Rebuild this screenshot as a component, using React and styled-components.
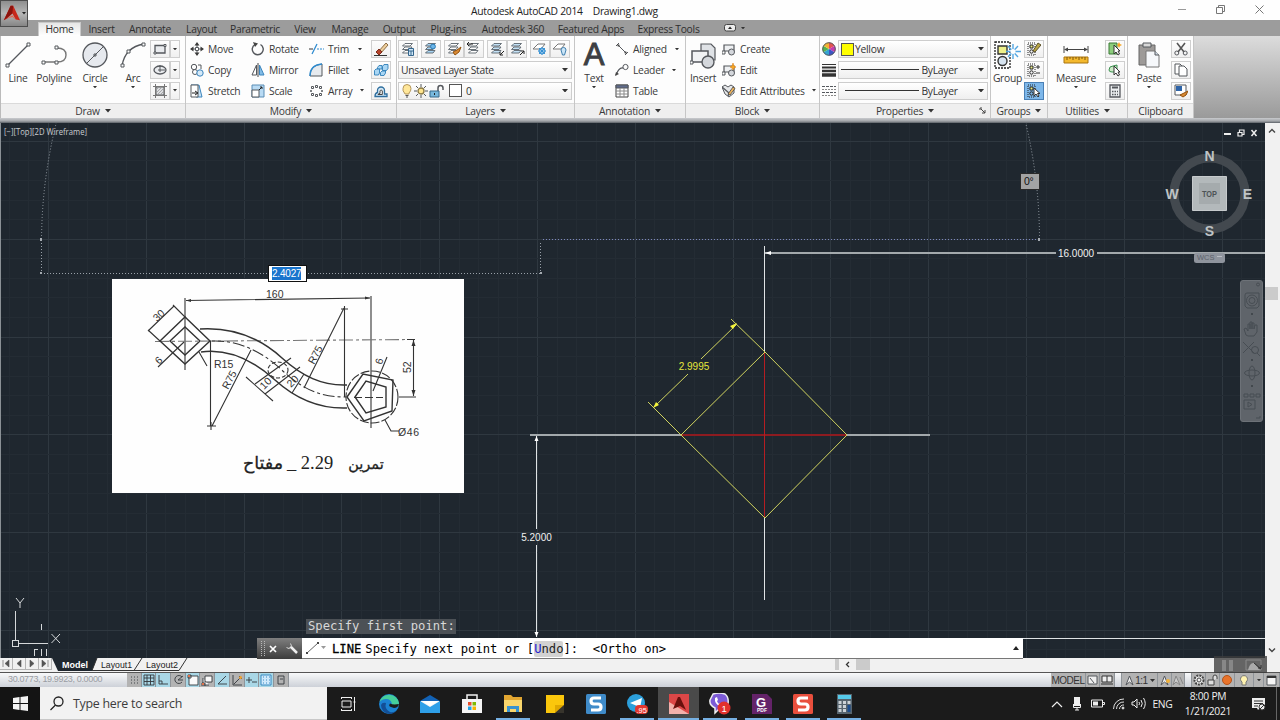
import React from 'react';
import styled, { createGlobalStyle } from 'styled-components';

const GlobalStyle = createGlobalStyle`
    * {
        box-sizing: border-box;
    }

    body {
        margin: 0;
        overflow: hidden;
        background: #1f272f;
        font-family: 'Open Sans', 'Noto Sans', sans-serif;
        font-size: 10.3px;
        letter-spacing: -0.26px;
        color: #3a3a3a;
    }

    svg {
        display: block;
        flex: none;
        letter-spacing: 0;
    }
`;

const Window = styled.div`
    position: relative;
    display: flex;
    flex-direction: column;
    width: 1280px;
    height: 720px;
    overflow: hidden;
`;

/* ---------- title and tabs ---------- */

const TitleBar = styled.header`
    display: flex;
    align-items: center;
    height: 20px;
    padding-left: 471px;
    background: #fefefe;
    color: #222;
    white-space: pre;
`;

const TitleText = styled.span`
    display: flex;
    gap: 10px;
    padding-top: 1px;
`;

const WindowButtons = styled.div`
    display: flex;
    gap: 30px;
    margin-left: auto;
    padding: 0 16px 2px 0;
`;

const AppButton = styled.div`
    position: absolute;
    top: 0;
    left: 0;
    display: flex;
    align-items: center;
    gap: 2px;
    width: 28px;
    height: 27px;
    padding-left: 2px;
    border: 1px solid #4d4d4d;
    background: linear-gradient(#8e8e8e, #b7b7b7 50%, #858585);
`;

const TabBar = styled.nav`
    display: flex;
    height: 16px;
    padding-left: 38px;
    background: #9c9c9c;
`;

const Tab = styled.span`
    width: ${(props) => props.$width}px;
    height: 13px;
    margin-top: 3px;
    line-height: 12px;
    text-align: center;
    color: #2e2e2e;
    white-space: nowrap;
    ${(props) => props.$active && `
        height: 14px;
        margin-top: 2px;
        line-height: 13px;
        background: linear-gradient(#e6e6e6, #fff);
        border: 1px solid #c9c9c9;
        border-bottom: 0;
    `}
`;

const TabToggle = styled.div`
    display: flex;
    align-items: center;
    gap: 5px;
    margin-left: 17px;
`;

/* ---------- ribbon ---------- */

const Ribbon = styled.section`
    display: flex;
    height: 82px;
    background: linear-gradient(#dcdcdc, #9a9a9a);
    border-left: 1px solid #bbb;
`;

const RibbonPanel = styled.div`
    display: flex;
    flex-direction: column;
    width: ${(props) => props.$width}px;
    background: #fdfdfd;
    border-right: 1px solid #c6c6c6;
`;

const PanelBody = styled.div`
    display: flex;
    height: 67px;
    padding-top: 4px;
`;

const PanelTitle = styled.div`
    position: relative;
    display: flex;
    align-items: center;
    justify-content: center;
    gap: 5px;
    height: 15px;
    border-top: 1px solid #dadada;
    background: #efefef;
`;

const Launcher = styled.span`
    position: absolute;
    right: 4px;
    top: 3px;
`;

const BigButton = styled.div`
    display: flex;
    flex-direction: column;
    align-items: center;
    flex: none;
    width: ${(props) => props.$width}px;
    margin-left: ${(props) => props.$gap || 0}px;
`;

const BigIcon = styled.span`
    display: flex;
    align-items: center;
    justify-content: center;
    height: 30px;
`;

const BigLabel = styled.span`
    height: 16px;
    line-height: 16px;
    white-space: nowrap;
`;

const LetterA = styled.span`
    height: 30px;
    font: 31px/30px 'Liberation Sans', sans-serif;
    color: #3d3f43;
    -webkit-text-stroke: 1px #3d3f43;
`;

const ToolColumn = styled.div`
    display: flex;
    flex-direction: column;
    flex: none;
    gap: 2.8px;
    width: ${(props) => props.$width}px;
    margin-left: ${(props) => props.$gap || 0}px;
`;

const ToolRow = styled.div`
    display: flex;
    align-items: center;
    height: 18px;
    gap: ${(props) => props.$gap || 0}px;
    white-space: nowrap;
`;

const ToolLabel = styled.span`
    margin-left: 4px;
    margin-right: ${(props) => props.$after || 0}px;
    line-height: 16px;
`;

const SmallButton = styled.span`
    display: flex;
    align-items: center;
    justify-content: center;
    width: ${(props) => props.$width || 20}px;
    height: 18px;
    border: 1px solid ${(props) => (props.$on ? '#4a80b5' : '#cfcfcf')};
    background: ${(props) => (props.$on ? '#7db7ea' : 'linear-gradient(#fdfdfd, #f0f0f0)')};
`;

const Combo = styled.span`
    display: flex;
    align-items: center;
    width: ${(props) => props.$width}px;
    height: 18px;
    padding: 0 3px 0 2px;
    border: 1px solid #cdcdcd;
    background: linear-gradient(#fff, #efefef);
    color: #333;
`;

const ComboEnd = styled.span`
    margin-left: auto;
`;

const Swatch = styled.span`
    width: 13px;
    height: 13px;
    margin-left: ${(props) => props.$before || 0}px;
    margin-right: ${(props) => props.$after || 2}px;
    border: 1px solid #555;
    background: ${(props) => props.$color};
`;

const RibbonEdge = styled.div`
    height: 5px;
    background: linear-gradient(#c9cbce, #a3a6aa 60%, #5a6066);
`;

/* ---------- drawing area ---------- */

const Workspace = styled.main`
    display: flex;
    height: 535px;
`;

const Canvas = styled.div`
    position: relative;
    width: 1265px;
    height: 535px;
    background: #1f272f;
`;

const ScrollBar = styled.div`
    display: flex;
    flex-direction: column;
    align-items: center;
    width: 15px;
    padding: 5px 2px 5px 0;
    background: #f1f1f1;
`;

const ScrollThumb = styled.span`
    width: 13px;
    height: 13px;
    margin-top: 154px;
    margin-bottom: auto;
    background: #cbcbcb;
`;

const DynamicInput = styled.div`
    position: absolute;
    left: ${(props) => props.$x}px;
    top: ${(props) => props.$y}px;
    width: ${(props) => props.$width}px;
    height: 17px;
    padding: 1px 3px;
    border: 1px solid ${(props) => (props.$locked ? '#2a2a2a' : '#111')};
    background: ${(props) => (props.$locked ? '#a3a3a3' : '#fff')};
    color: ${(props) => (props.$locked ? '#111' : '#fff')};
    font: 10.5px/13px 'Liberation Sans', sans-serif;
`;

const Selected = styled.span`
    display: block;
    width: 29px;
    background: #1874cd;
    font-size: 10px;
    letter-spacing: -0.2px;
`;

const NavBar = styled.div`
    position: absolute;
    left: 1240px;
    top: 157px;
    width: 23px;
    height: 142px;
    border: 1px solid #6d7278;
    border-radius: 3px;
    background: #5f646a;
`;

const CommandHistory = styled.div`
    position: absolute;
    left: 306px;
    top: 496px;
    height: 15px;
    padding: 0 1px 0 2px;
    background: #4c5156;
    color: #d8d8d8;
    font: 12.2px/15px 'DejaVu Sans Mono', monospace;
    letter-spacing: 0;
    white-space: pre;
`;

const CommandLine = styled.div`
    position: absolute;
    left: 257px;
    top: 515px;
    z-index: 1;
    display: flex;
    align-items: center;
    width: 766px;
    height: 21px;
    padding-right: 4px;
    background: #fff;
    color: #000;
    font: 12.2px/16px 'DejaVu Sans Mono', monospace;
    letter-spacing: 0;
    white-space: pre;
    border-bottom: 1px solid #777;
`;

const CommandGrip = styled.span`
    display: flex;
    align-items: center;
    width: 45px;
    height: 21px;
    background: linear-gradient(#7f7f7f, #3c3c3c);
`;

const CommandText = styled.span`
    display: flex;
    align-items: center;
    margin-left: 4px;
    padding-top: 2px;
`;

const CommandName = styled.span`
    margin-right: 4px;
    -webkit-text-stroke: 0.3px #000;
`;

const CommandOption = styled.span`
    display: inline-block;
    border-radius: 2px;
    background: #d2d2d2;
    color: #222;

    &::first-letter {
        color: #1a1ad0;
    }
`;

/* ---------- layout tabs and status bar ---------- */

const LayoutStrip = styled.div`
    position: relative;
    display: flex;
    height: 14px;
    background: #f1f1f1;
`;

const StepButton = styled.span`
    display: flex;
    align-items: center;
    justify-content: center;
    width: 13px;
    height: 12px;
    border-right: 1px solid #b5b5b5;
    border-bottom: 1px solid #b5b5b5;
`;

const SheetTabs = styled.svg`
    font: 9.3px 'Liberation Sans', sans-serif;
`;

const HScroll = styled.div`
    display: flex;
    align-items: center;
    margin-left: 635px;
    gap: 6px;
    height: 13px;
`;

const HBlock = styled.span`
    width: ${(props) => props.$width}px;
    height: 11px;
    background: #cbcbcb;
`;

const RecorderOverlay = styled.div`
    position: absolute;
    left: 1214px;
    top: -2px;
    z-index: 2;
    width: 53px;
    height: 17px;
    background: rgba(60, 60, 60, 0.78);
`;

const StatusBar = styled.div`
    display: flex;
    align-items: stretch;
    height: 15px;
    padding-left: 8px;
    border-top: 1px solid #555;
    background: linear-gradient(#f8f9fa, #cdd1d8);
`;

const Coordinates = styled.span`
    width: 119px;
    font: 9px/13px 'Liberation Sans', sans-serif;
    letter-spacing: -0.35px;
    color: #9a9da3;
`;

const StatusToggle = styled.span`
    display: flex;
    align-items: center;
    justify-content: center;
    width: ${(props) => props.$width || 14.7}px;
    border-right: 1px solid #8f9499;
    background: ${(props) => (props.$on ? '#a9d7e6' : '#b3b3b3')};
    font: 10px 'Liberation Sans', sans-serif;
    letter-spacing: -0.5px;
    color: #333;
`;

const StatusGap = styled.span`
    width: 7px;
    border-right: 1px solid #8f9499;
`;

const StatusRight = styled.div`
    display: flex;
    margin-left: auto;
`;

/* ---------- windows taskbar ---------- */

const Taskbar = styled.footer`
    display: flex;
    height: 33px;
    background: #1b1b1b;
`;

const StartButton = styled.span`
    display: flex;
    align-items: center;
    justify-content: center;
    width: 40px;
    background: #141414;
`;

const SearchBox = styled.div`
    display: flex;
    align-items: center;
    gap: 9px;
    width: 287px;
    padding: 0 0 0 10px;
    border-bottom: 1px solid #c8c8c8;
    background: #f2f2f2;
    color: #3c3c3c;
    font-size: 12.4px;
`;

const TaskItem = styled.span`
    display: flex;
    align-items: center;
    justify-content: center;
    width: 41.4px;
    height: 33px;
    ${(props) => props.$active && 'background: #4a4a4a;'}
    ${(props) => props.$open && 'box-shadow: inset 0 -2px #76b0e3;'}
    ${(props) => props.$open && !props.$active && 'width: 34px; margin: 0 3.7px;'}
`;

const Tray = styled.div`
    display: flex;
    align-items: center;
    margin-left: auto;
    color: #f0f0f0;
`;

const TrayItem = styled.span`
    display: flex;
    justify-content: center;
    width: ${(props) => props.$width}px;
`;

const Clock = styled.span`
    width: 64px;
    text-align: center;
    line-height: 15px;
`;

const DesktopEdge = styled.span`
    width: 4px;
    height: 33px;
    border-left: 1px solid #666;
`;

/* ---------- icons ---------- */

const Arrow = ({ size = 5, color = '#333' }) => (
    <svg width={size} height={size * 0.6} viewBox="0 0 5 3"><path d="M0 0H5L2.5 3Z" fill={color} /></svg>
);

const Glyph = ({ w = 14, h = 14, children }) => (
    <svg width={w} height={h} viewBox={`0 0 ${w} ${h}`} fill="none" stroke="#55585d" strokeWidth="1">
        {children}
    </svg>
);

const LineIcon = () => (
    <Glyph w={26} h={28}>
        <path d="M3 24L23 4" strokeWidth="1.3" />
        <path d="M1 23h3v3H1zM22 2h3v3h-3z" fill="#fff" />
    </Glyph>
);

const PolylineIcon = () => (
    <Glyph w={27} h={22}>
        <path d="M2 18H16Q25 18 25 11T16 4" strokeWidth="1.4" stroke="#777" />
        <path d="M1 17h3v3H1zM14 17h3v3h-3zM14 2h3v3h-3z" fill="#fff" />
    </Glyph>
);

const CircleIcon = () => (
    <Glyph w={26} h={26}>
        <circle cx="13" cy="13" r="12" fill="#e6e9ee" strokeWidth="1.3" />
        <path d="M5 21L21 5M11 13h4M13 11v4" />
    </Glyph>
);

const ArcIcon = () => (
    <Glyph w={26} h={28}>
        <path d="M2 25Q5 6 24 3" strokeWidth="1.3" />
        <path d="M1 23h3v3H1zM22 2h3v3h-3zM7 9h3v3H7z" fill="#fff" />
    </Glyph>
);

const RectIcon = () => (
    <Glyph><path d="M2 3.5H12V11H2Z" fill="#e9ebee" strokeWidth="1.3" /><path d="M1 10h2v2H1zM11 2.5h2v2h-2z" fill="#fff" /></Glyph>
);

const EllipseIcon = () => (
    <Glyph><ellipse cx="7" cy="7" rx="6" ry="4" fill="#e9ebee" strokeWidth="1.3" /><path d="M5 7h7M7 3v6M6 3h2" /></Glyph>
);

const HatchIcon = () => (
    <Glyph>
        <path d="M3 3H11V11H3Z" fill="#dcdee1" />
        <path d="M3 6L6 3M3 9L9 3M4 11L11 4M7 11L11 7" stroke="#999" strokeWidth=".8" />
        <path d="M2.500 0v14M11.500 0v14M0 2.500h14M0 11.500h14" stroke="#777" />
    </Glyph>
);

const MoveIcon = () => (
    <Glyph>
        <path d="M7 1V13M1 7H13" />
        <path d="M7 0L9.500 3.500H4.500ZM7 14L4.500 10.500H9.500ZM0 7L3.500 4.500V9.500ZM14 7L10.500 9.500V4.500Z" fill="#3c3c3c" stroke="none" />
        <path d="M5.500 5.500h3v3h-3z" fill="#fff" />
    </Glyph>
);

const CopyIcon = () => (
    <Glyph>
        <circle cx="4" cy="4" r="2.7" /><path d="M8 2h3v4" />
        <circle cx="5" cy="9" r="2.5" fill="#fff" /><circle cx="10" cy="10" r="3.2" fill="#d5e9f8" stroke="#3c85bd" />
    </Glyph>
);

const StretchIcon = () => (
    <Glyph><path d="M1 1H9L12 13H6" fill="#cbe4f6" stroke="#3c85bd" /><path d="M1 1H8V13H1Z" fill="#fff" /><path d="M2 9h5M5 7l3 2-3 2" stroke="#222" /></Glyph>
);

const RotateIcon = () => (
    <Glyph><path d="M9.500 2.500A5.500 5.500 0 1 1 4 2.500" strokeWidth="1.4" /><path d="M2 0L7 1.500L4 5Z" fill="#444" stroke="none" /></Glyph>
);

const MirrorIcon = () => (
    <Glyph><path d="M5.500 2V12H1Z" fill="#fff" /><path d="M8.500 2V12H13Z" fill="#82bce6" stroke="#3c85bd" /><path d="M7 0V14" stroke="#444" /></Glyph>
);

const ScaleIcon = () => (
    <Glyph><path d="M1 1H13V13H1Z" fill="#b9dbf4" stroke="#5a8db5" /><path d="M1 6H8V13H1Z" fill="#fff" /><path d="M8 6L11 3M9 3h2v2" stroke="#222" /></Glyph>
);

const TrimIcon = () => (
    <Glyph w={15}><path d="M0 7H4" stroke="#333" /><path d="M3 12L8 2" stroke="#2d8bd0" strokeWidth="1.3" /><path d="M8 7H15" stroke="#2d8bd0" strokeDasharray="2 1" /></Glyph>
);

const FilletIcon = () => (
    <Glyph w={15}><path d="M1 13Q1 2 13 1V13Z" fill="#e6eaee" /><path d="M1 13Q1 2 13 1" stroke="#2d8bd0" strokeWidth="1.5" /></Glyph>
);

const ArrayIcon = () => (
    <Glyph w={15}><path d="M2.500 2.500h2v2h-2zM6.500 1.500h2v2h-2zM10.500 2.500h2v2h-2zM2.500 9.500h2v2h-2zM6.500 10.500h2v2h-2zM10.500 9.500h2v2h-2zM1.500 6.500h1v1h-1zM12.500 6.500h1v1h-1z" fill="#fff" /></Glyph>
);

const EraseIcon = () => (
    <Glyph w={16}><path d="M5 10L13 1L15 3L8 11Z" fill="#eecf9d" stroke="#8c6d45" /><path d="M3 10L6 7L9 10L6 13Z" fill="#b5432a" stroke="#7c2c1a" /><path d="M1 13.500h13" stroke="#333" /></Glyph>
);

const ExplodeIcon = () => (
    <Glyph w={16}>
        <g fill="#a9d6f4" stroke="#2f7fb9" strokeWidth=".9">
            <path d="M9.500 3.500L11 1.500H15V5.500L13.500 7.500H9.500Z" />
            <path d="M4.500 4.500L6 2.500H9V6H4.500Z" />
            <path d="M1.500 7.500L3 6H6.500V10L5.500 12H1.500Z" />
            <path d="M7.500 9.500L9 8H12.500V10L11 12.500H7.500Z" />
        </g>
    </Glyph>
);

const OffsetIcon = () => (
    <Glyph w={16}><path d="M2 12.500H14V10H11.500V6.500A3.500 3.500 0 0 0 4.500 6.500V8.500Q2 9 2 12.500Z" fill="#d5e9f7" stroke="#2f6f9f" strokeWidth="1.3" /><path d="M5 10.500Q5 9.500 7 9.500V7A1.200 1.200 0 0 1 9.300 7V10.500Z" fill="#fff" stroke="#444" /></Glyph>
);

/* stacked sheets, the badge on top tells the layer tools apart */
const LayerIcon = ({ tint = '#fff', badge }) => (
    <Glyph w={16}>
        <path d="M2.500 11L5 8.500H12L10 11ZM2.500 7.500L5 5H12L10 7.500ZM2.500 4L5 1.500H12.500L10 4Z" fill={tint} stroke="#5b646c" strokeWidth=".9" />
        {badge === 'grid' && <path d="M8.500 6.500h5v7h-5zM8.500 9h5M11 9v4" fill="#cfe6f7" stroke="#35668c" />}
        {badge === 'dot' && <circle cx="10" cy="4.500" r="2.400" fill="#6cb6ea" stroke="#2c7cb5" />}
        {badge === 'brush' && <path d="M7 10l4-2 4-3-2 5-4 3z" fill="#d98a34" stroke="#94530f" />}
        {badge === 'arrow' && <path d="M1 2h6M1 2l2-2M1 2l2 2" stroke="#222" />}
        {badge === 'in' && <path d="M15 9l-4 4M11 10v3h3" stroke="#222" />}
        {badge === 'out' && <path d="M11 13l4-4M12 9h3v3" stroke="#222" />}
    </Glyph>
);

const FreezeIcon = ({ bulb }) => (
    <Glyph w={16}>
        <path d="M1 7L6 2H13L9 7Z" fill="#fff" stroke="#777" />
        {bulb
            ? <path d="M9 8a2.500 2.500 0 1 1 5 0L12.500 13h-2Z" fill="#cbe5f7" stroke="#3f7fae" />
            : <g stroke="#2d8bd0" strokeWidth=".9"><circle cx="10" cy="9" r="3" fill="#d5ebfa" /><path d="M10 5v8M6 9h8M7 6l6 6M13 6l-6 6" /></g>}
    </Glyph>
);

const BulbIcon = () => (
    <Glyph w={12}><path d="M3.500 9Q1.500 7 2 4.500A4 4 0 0 1 10 4.500Q10 7 8 9V10H4Z" fill="#ffe79a" stroke="#b4965a" /><path d="M4.500 11.500h3M5 13h2" stroke="#555" /></Glyph>
);

const SunIcon = () => (
    <Glyph><circle cx="7" cy="7" r="3" fill="#ffe58e" stroke="#8b7a45" strokeWidth="1.3" /><path d="M7 0v3M7 11v3M0 7h3M11 7h3M2 2l2 2M10 10l2 2M12 2l-2 2M4 10l-2 2" /></Glyph>
);

const LockIcon = ({ fill = '#78b8dd' }) => (
    <Glyph w={15}><path d="M9 7V4A2.500 2.500 0 0 1 14 4V6" strokeWidth="1.5" /><path d="M1 7H10V13H1Z" fill={fill} stroke="#36698a" /><path d="M5.500 9v2" stroke="#222" /></Glyph>
);

const DimIcon = () => (
    <Glyph><path d="M3 3L11 11M1 4L4 1M10 13L13 10" /><path d="M2 2L5 3L3 5ZM12 12L9 11L11 9Z" fill="#444" stroke="none" /></Glyph>
);

const LeaderIcon = () => (
    <Glyph><path d="M1 12Q4 4 8 5" strokeWidth="1.3" /><circle cx="10.500" cy="4" r="2.6" /><path d="M0 13L1 9L4 11Z" fill="#444" stroke="none" /></Glyph>
);

const TableIcon = () => (
    <Glyph><path d="M1 1H13V13H1Z" fill="#fff" stroke="#444" /><path d="M1 1H13V4H1Z" fill="#5f6b8b" /><path d="M1 7H13M1 10H13M5 4V13M9 4V13" stroke="#8a8a8a" /></Glyph>
);

const InsertIcon = () => (
    <Glyph w={27} h={27}>
        <path d="M11 2H21L25 6V18H11Z" fill="#dfe2e6" strokeWidth="1.2" />
        <path d="M2 9H18V20H2Z" fill="#f1f2f4" strokeWidth="1.5" />
        <path d="M0 19h3v3H0z" fill="#fff" />
        <circle cx="18" cy="20" r="6" fill="#d4d7dc" strokeWidth="1.4" />
    </Glyph>
);

const BlockIcon = ({ kind }) => (
    <Glyph>
        <path d="M2 3H12V9H2Z" fill="#eef0f2" strokeWidth="1.2" /><path d="M0 9h3v3H0z" fill="#fff" />
        <circle cx="9.500" cy="10" r="3" fill="#d4d7dc" />
        {kind === 'edit' && <path d="M11 0l1 3 2 1-2 1-1 2-1-2-2-1 2-1z" fill="#f6a623" stroke="#d97706" strokeWidth=".5" />}
    </Glyph>
);

const AttributeIcon = () => (
    <Glyph>
        <path d="M0 3L3 1L6 3L9 1L12 3V9L7 13L3 10Z" fill="#e6e8ea" />
        <path d="M0 3L7 9L6 12" strokeWidth="1.3" />
        <path d="M6 10L11 3L13 4.500L8 11Z" fill="#efb45c" stroke="#444" strokeWidth=".8" />
    </Glyph>
);

const ColorWheel = () => (
    <Glyph>
        <path d="M7 7V0.500A6.500 6.500 0 0 1 12.600 3.700Z" fill="#e45252" stroke="none" />
        <path d="M7 7L12.600 3.700A6.500 6.500 0 0 1 12.600 10.300Z" fill="#c53cae" stroke="none" />
        <path d="M7 7L12.600 10.300A6.500 6.500 0 0 1 7 13.500Z" fill="#3c55c5" stroke="none" />
        <path d="M7 7V13.500A6.500 6.500 0 0 1 1.400 10.300Z" fill="#35a4d2" stroke="none" />
        <path d="M7 7L1.400 10.300A6.500 6.500 0 0 1 1.400 3.700Z" fill="#53b450" stroke="none" />
        <path d="M7 7L1.400 3.700A6.500 6.500 0 0 1 7 0.500Z" fill="#f2b233" stroke="none" />
        <circle cx="7" cy="7" r="6.300" />
    </Glyph>
);

const WeightIcon = () => (
    <Glyph><path d="M0 1.500H14" stroke="#333" /><path d="M0 4.500H14" stroke="#333" strokeWidth="2" /><path d="M0 8H14" stroke="#333" strokeWidth="2.500" /><path d="M0 12H14" stroke="#333" strokeWidth="3.500" /></Glyph>
);

const LinetypeIcon = () => (
    <Glyph><path d="M0 2.500H14M0 8.500H14" strokeDasharray="3 1" /><path d="M0 5.500H14M0 11.500H14" strokeDasharray="2 1" stroke="#888" /></Glyph>
);

const GroupIcon = () => (
    <Glyph w={27} h={28}>
        <path d="M1 1H16V27H1Z" stroke="#222" strokeWidth="1.3" strokeDasharray="2 1" />
        <path d="M4 5H13V13H4Z" fill="#eef08a" stroke="#333" strokeWidth="1.4" />
        <circle cx="8.500" cy="20" r="4.500" fill="#d6e3ef" stroke="#333" strokeWidth="1.4" />
        <path d="M19 3V18M12 10.500H27M14 5L24 16M24 5L14 16" stroke="#54a7e2" strokeWidth="1.4" />
        <circle cx="19" cy="10.500" r="2.500" fill="#fff" stroke="none" />
    </Glyph>
);

const GroupTool = ({ kind }) => (
    <Glyph>
        <path d="M1 1H8V13H1Z" strokeDasharray="1 1" stroke="#222" /><path d="M3 3h3v3H3z" fill="#eef08a" stroke="#222" /><circle cx="4.500" cy="9.500" r="1.700" stroke="#222" />
        {kind === 'edit' && <path d="M6 9L11 1L14 3L8 10Z" fill="#b8a545" stroke="#5c522a" />}
        {kind === 'add' && <path d="M9 4h4M11 2v4M9 10h4" stroke="#333" />}
        {kind === 'pick' && <path d="M7 4V12L9 10L11 13L12 12L10.500 9.500H13Z" fill="#fff" stroke="#333" />}
    </Glyph>
);

const MeasureIcon = () => (
    <Glyph w={26} h={18}>
        <path d="M1 0V7M25 0V7M2 3.500H24" stroke="#444" /><path d="M1 3.500l4-2v4zM25 3.500l-4-2v4z" fill="#444" stroke="none" />
        <path d="M1 11H25V17H1Z" fill="#f4b92e" stroke="#a97510" /><path d="M4 11v3M7 11v2M10 11v3M13 11v2M16 11v3M19 11v2M22 11v3" stroke="#7c560b" />
    </Glyph>
);

const SelectIcon = ({ round }) => (
    <Glyph>
        {round ? <path d="M1 7Q1 3 5 3L9 2V9H4Q1 9 1 7Z" fill="#cdebc7" stroke="#3b9150" /> : <path d="M1 1H9V12H1Z" fill="#8ccd7c" stroke="#3b7b36" />}
        <path d="M6 3V12L8 10L10 13L11.500 12L10 9H12Z" fill="#fff" stroke="#333" />
        {!round && <path d="M11 0l1 2 2 1-2 1-1 2-1-2-1-1 1-1z" fill="#f6a623" stroke="none" />}
    </Glyph>
);

const CalcIcon = () => (
    <Glyph><path d="M2 1H12V13H2Z" fill="#eceef0" strokeWidth="1.3" /><path d="M4 3.500H10" strokeWidth="2" /><path d="M4 7.500h6M4 10.500h6" strokeDasharray="1.500 1" strokeWidth="1.4" /></Glyph>
);

const PasteIcon = () => (
    <Glyph w={24} h={27}>
        <path d="M2 3H18V23H2Z" fill="#9d9a98" stroke="#666" /><path d="M6 1H14V5H6Z" fill="#d8d8d8" /><path d="M9 9H18L22 13V25H9Z" fill="#f6f8fb" stroke="#777" /><path d="M18 9V13H22" fill="#cfd9e4" />
    </Glyph>
);

const CutIcon = () => (
    <Glyph><path d="M3 1L10 10M11 1L4 10" strokeWidth="1.6" stroke="#555" /><circle cx="2.800" cy="11" r="2" /><circle cx="11.200" cy="11" r="2" /></Glyph>
);

const PagesIcon = () => (
    <Glyph><path d="M1 1H6L9 4V11H1Z" fill="#fff" /><path d="M5 3H10L13 6V13H5Z" fill="#fff" /></Glyph>
);

const MatchIcon = () => (
    <Glyph><path d="M1 1H12V11H1Z" fill="#fff" /><path d="M2 2H8V7H2Z" fill="#2e64a8" stroke="none" /><path d="M6 11l4-2 4-2-2 4-3 2z" fill="#d98a34" stroke="#94530f" /></Glyph>
);

/* ---------- ribbon content ---------- */

const tabs = [
    ['Home', 43, true], ['Insert', 41], ['Annotate', 56], ['Layout', 47], ['Parametric', 60],
    ['View', 40], ['Manage', 50], ['Output', 48], ['Plug-ins', 51], ['Autodesk 360', 78],
    ['Featured Apps', 78], ['Express Tools', 77],
];

const Panel = ({ title, width, arrow = true, launcher, children }) => (
    <RibbonPanel $width={width}>
        <PanelBody>{children}</PanelBody>
        <PanelTitle>
            {title}
            {arrow && <Arrow size={6} />}
            {launcher && <Launcher><Glyph w={7} h={7}><path d="M1 1h2M1 1v2M2 2l4 4M6 3v3H3" stroke="#444" /></Glyph></Launcher>}
        </PanelTitle>
    </RibbonPanel>
);

const Big = ({ icon, label, width, gap, arrow }) => (
    <BigButton $width={width} $gap={gap}>
        <BigIcon>{icon}</BigIcon>
        <BigLabel>{label}</BigLabel>
        {arrow && <Arrow size={4} />}
    </BigButton>
);

const Tool = ({ icon, label, after }) => (
    <ToolRow>
        {icon}
        <ToolLabel $after={after}>{label}</ToolLabel>
        {after && <Arrow size={4} />}
    </ToolRow>
);

const SplitButton = ({ icon }) => (
    <ToolRow>
        <SmallButton>{icon}</SmallButton>
        <SmallButton $width={10}><Arrow size={4} /></SmallButton>
    </ToolRow>
);

const ByLayerCombo = ({ line }) => (
    <Combo $width={150}>
        <svg width={78} height={3}><path d={`M${line} 1.5H78`} stroke="#333" /></svg>
        <span>&nbsp;ByLayer</span>
        <ComboEnd><Arrow size={6} /></ComboEnd>
    </Combo>
);

const RibbonContent = () => (
    <Ribbon>
        <Panel title="Draw" width={185}>
            <Big icon={<LineIcon />} label="Line" width={34} />
            <Big icon={<PolylineIcon />} label="Polyline" width={36} gap={1} />
            <Big icon={<CircleIcon />} label="Circle" width={36} gap={5} arrow />
            <Big icon={<ArcIcon />} label="Arc" width={36} gap={2} arrow />
            <ToolColumn $width={30} $gap={-1}>
                <SplitButton icon={<RectIcon />} />
                <SplitButton icon={<EllipseIcon />} />
                <SplitButton icon={<HatchIcon />} />
            </ToolColumn>
        </Panel>
        <Panel title="Modify" width={211}>
            <ToolColumn $width={61} $gap={4}>
                <Tool icon={<MoveIcon />} label="Move" />
                <Tool icon={<CopyIcon />} label="Copy" />
                <Tool icon={<StretchIcon />} label="Stretch" />
            </ToolColumn>
            <ToolColumn $width={58}>
                <Tool icon={<RotateIcon />} label="Rotate" />
                <Tool icon={<MirrorIcon />} label="Mirror" />
                <Tool icon={<ScaleIcon />} label="Scale" />
            </ToolColumn>
            <ToolColumn $width={62}>
                <Tool icon={<TrimIcon />} label="Trim" after={9} />
                <Tool icon={<FilletIcon />} label="Fillet" after={9} />
                <Tool icon={<ArrayIcon />} label="Array" after={7} />
            </ToolColumn>
            <ToolColumn $width={20}>
                <SmallButton><EraseIcon /></SmallButton>
                <SmallButton><ExplodeIcon /></SmallButton>
                <SmallButton><OffsetIcon /></SmallButton>
            </ToolColumn>
        </Panel>
        <Panel title="Layers" width={178}>
            <ToolColumn $width={174} $gap={1}>
                <ToolRow $gap={3}>
                    <SmallButton><LayerIcon badge="grid" /></SmallButton>
                    <SmallButton><LayerIcon tint="#a6d3f3" badge="dot" /></SmallButton>
                    <ToolRow>
                        <SmallButton><LayerIcon badge="brush" /></SmallButton>
                        <SmallButton><LayerIcon badge="arrow" /></SmallButton>
                    </ToolRow>
                    <ToolRow>
                        <SmallButton><LayerIcon tint="#c4e2f7" badge="in" /></SmallButton>
                        <SmallButton><LayerIcon tint="#c4e2f7" badge="out" /></SmallButton>
                    </ToolRow>
                    <ToolRow>
                        <SmallButton><FreezeIcon /></SmallButton>
                        <SmallButton><FreezeIcon bulb /></SmallButton>
                    </ToolRow>
                </ToolRow>
                <Combo $width={174}>Unsaved Layer State<ComboEnd><Arrow size={6} /></ComboEnd></Combo>
                <Combo $width={174}>
                    <ToolRow $gap={1}><BulbIcon /><SunIcon /><LockIcon /></ToolRow>
                    <Swatch $color="#fff" $before={5} $after={4} />0
                    <ComboEnd><Arrow size={6} /></ComboEnd>
                </Combo>
            </ToolColumn>
        </Panel>
        <Panel title="Annotation" width={111}>
            <Big icon={<LetterA>A</LetterA>} label="Text" width={38} arrow />
            <ToolColumn $width={68} $gap={2}>
                <Tool icon={<DimIcon />} label="Aligned" after={8} />
                <Tool icon={<LeaderIcon />} label="Leader" after={7} />
                <Tool icon={<TableIcon />} label="Table" />
            </ToolColumn>
        </Panel>
        <Panel title="Block" width={134}>
            <Big icon={<InsertIcon />} label="Insert" width={34} />
            <ToolColumn $width={96} $gap={2}>
                <Tool icon={<BlockIcon />} label="Create" />
                <Tool icon={<BlockIcon kind="edit" />} label="Edit" />
                <Tool icon={<AttributeIcon />} label="Edit Attributes" after={7} />
            </ToolColumn>
        </Panel>
        <Panel title="Properties" width={171} launcher>
            <ToolColumn $width={168} $gap={2}>
                <ToolRow $gap={2}>
                    <ColorWheel />
                    <Combo $width={150}><Swatch $color="#ffff00" $after={1} />Yellow<ComboEnd><Arrow size={6} /></ComboEnd></Combo>
                </ToolRow>
                <ToolRow $gap={2}><WeightIcon /><ByLayerCombo line={0} /></ToolRow>
                <ToolRow $gap={2}><LinetypeIcon /><ByLayerCombo line={4} /></ToolRow>
            </ToolColumn>
        </Panel>
        <Panel title="Groups" width={57}>
            <Big icon={<GroupIcon />} label="Group" width={31} gap={1} />
            <ToolColumn $width={20} $gap={1}>
                <SmallButton><GroupTool kind="edit" /></SmallButton>
                <SmallButton><GroupTool kind="add" /></SmallButton>
                <SmallButton $on><GroupTool kind="pick" /></SmallButton>
            </ToolColumn>
        </Panel>
        <Panel title="Utilities" width={80}>
            <Big icon={<MeasureIcon />} label="Measure" width={56} arrow />
            <ToolColumn $width={20} $gap={1}>
                <SmallButton><SelectIcon /></SmallButton>
                <SmallButton><SelectIcon round /></SmallButton>
                <SmallButton><CalcIcon /></SmallButton>
            </ToolColumn>
        </Panel>
        <Panel title="Clipboard" width={66} arrow={false}>
            <Big icon={<PasteIcon />} label="Paste" width={42} arrow />
            <ToolColumn $width={20} $gap={1}>
                <SmallButton><CutIcon /></SmallButton>
                <SmallButton><PagesIcon /></SmallButton>
                <SmallButton><MatchIcon /></SmallButton>
            </ToolColumn>
        </Panel>
    </Ribbon>
);

/* ---------- drawing ---------- */

const STEP = 19.56;

const GridLines = () => (
    <g shapeRendering="crispEdges">
        {Array.from({ length: 65 }, (_, i) => {
            const x = 9.4 + i * STEP;
            return <path key={i} d={`M${x} 123V658`} stroke={i % 5 === 2 ? '#2f3840' : '#242c34'} />;
        })}
        {Array.from({ length: 27 }, (_, i) => {
            const y = 141.4 + i * STEP;
            return <path key={i} d={`M0 ${y}H1265`} stroke={i % 5 === 0 ? '#2f3840' : '#242c34'} />;
        })}
    </g>
);

/* wrench sheet pasted next to the drawing */
const Sheet = () => (
    <g fill="none" stroke="#333" strokeWidth="1.1">
        <path d="M112 279H464V493H112Z" fill="#fefefe" stroke="none" />
        <path d="M185 298V370M371 296V428M186 300.500L370 298" />
        <path d="M186 300.500l5-1.500v3zM370 298l-5-1.500v3z" fill="#333" stroke="none" />
        <path d="M155 341.500L412 339.500" stroke="#777" strokeDasharray="14 3 3 3" />
        <path d="M160 341L185 317L210 341L185 364Z" strokeWidth="1.4" />
        <path d="M170 341L185 327L200 341L185 355Z" strokeWidth="1.4" />
        <path d="M148 331L174 306M148 330L160 341M173 305L186 318M158 367L184 342" />
        <path d="M200 329C232 327 260 338 282 358C302 376 322 386 347 385M201 352C230 348 255 362 275 380C297 400 320 409 347 408" strokeWidth="1.5" />
        <path d="M212 341C242 340 265 354 284 372C305 391 322 397 346 397" strokeDasharray="12 3 3 3" />
        <path d="M210.500 341V426M212 426L251 350M207 426H216M211 422V430M199 352L207 366" />
        <path d="M344.500 306V397M344 308L304 388M341 309H348" />
        <path d="M246 377L273 401M255 384L291 358M265 394L300 367M292 393L304 374" />
        <ellipse cx="278" cy="370" rx="10" ry="8" strokeDasharray="4 2" />
        <circle cx="372" cy="397" r="26" strokeDasharray="9 2" />
        <path d="M347 397L363 374L393 380L392 411L364 421Z" strokeWidth="1.4" />
        <path d="M355 397L366 381L386 387V407L366 413Z" strokeWidth="1.4" />
        <path d="M354 397.500H383" strokeDasharray="8 3" />
        <path d="M399 397H416M413.500 339V396M407 339.500H415M373 391L387 357M385 420L391 431H399" />
        <path d="M413.500 340l-2 6h4zM413.500 396l-2-6h4z" fill="#333" stroke="none" />
        <g fill="#333" stroke="none" fontFamily="'Liberation Sans', sans-serif" fontSize="10.500">
            <text x="266" y="298">160</text>
            <text x="214" y="368">R15</text>
            <text transform="translate(157 322) rotate(-43)">30</text>
            <text transform="translate(159 365) rotate(-43)">6</text>
            <text transform="translate(228 390) rotate(-62)">R75</text>
            <text transform="translate(314 365) rotate(-62)">R75</text>
            <text transform="translate(264 390) rotate(-45)">10</text>
            <text transform="translate(291 388) rotate(-45)">20</text>
            <text transform="translate(382 365) rotate(-75)">6</text>
            <text transform="translate(411 373) rotate(-90)">52</text>
            <text x="398" y="436" textLength="21">Ø46</text>
        </g>
        <g fill="#222" stroke="none" textAnchor="middle">
            <text x="263" y="469" fontFamily="'DejaVu Sans', sans-serif" fontSize="17.500" strokeWidth=".3" stroke="#222">مفتاح</text>
            <text x="310" y="469" fontFamily="'Liberation Serif', serif" fontSize="18.500">_ 2.29</text>
            <text x="366" y="469" fontFamily="'DejaVu Sans', sans-serif" fontSize="14.500" strokeWidth=".3" stroke="#222">تمرين</text>
        </g>
    </g>
);

const Drawing = () => (
    <svg width="1265" height="535" viewBox="0 123 1265 535">
        <GridLines />
        <path d="M0.500 123V658" stroke="#8b9196" />
        <text x="4" y="135" fill="#c9cdd1" fontSize="8.500" fontFamily="'Open Sans', sans-serif" textLength="83" lengthAdjust="spacingAndGlyphs">[−][Top][2D Wireframe]</text>

        <g fill="none" stroke="#98a0a8" strokeDasharray="1 2">
            <path d="M41.500 239A499.500 499.500 0 0 1 58 116M1039.500 239A499.500 499.500 0 0 0 1024 116" />
            <path d="M41.500 240V273.500H541M540.500 243V273" />
            <path d="M543 239.500H1040" stroke="#7c86bd" />
        </g>
        <path d="M40 238h2v3h-2zM40 272h2v2h-2zM540 272h2v2h-2zM1038 238h2v3h-2z" fill="#a5abb1" />

        <g stroke="#dfe3e5" shapeRendering="crispEdges">
            <path d="M764.500 246V352M764.500 518V600" />
            <path d="M536.500 436V529M536.500 545V637" />
            <path d="M1023 638.500H1265" />
        </g>
        <g stroke="#a3a9ac" strokeWidth="2">
            <path d="M530 435H681M847 435H930" />
            <path d="M765 253H1056M1097 253H1265" />
        </g>
        <path d="M765 253l6-2v4zM536.500 436l-2 5h4zM536.500 637l-2-5h4z" fill="#fff" />

        <path d="M681 435H847" stroke="#8d1b20" strokeWidth="2" />
        <path d="M764.500 352V518" stroke="#b51d22" />
        <g fill="none" stroke="#d0d35f">
            <path d="M765 352L847 435L765 518L681 435Z" />
            <path d="M765 352L731 319M681 435L648 402M655 406L688 374M701 359L737 324" />
        </g>
        <path d="M653 408l6-3-3-3zM737 323l-7 3 3 3z" fill="#f5f53c" />

        <g fontFamily="'Liberation Sans', sans-serif" fontSize="10" textAnchor="middle" fill="#f1f1f1">
            <text x="694" y="369.500" fill="#e6e63c">2.9995</text>
            <text x="1076" y="257">16.0000</text>
            <text x="536.500" y="541">5.2000</text>
        </g>

        <Sheet />

        <g fill="none" stroke="#d5d8da" shapeRendering="crispEdges">
            <path d="M12.500 640.500H18.500V646.500H12.500Z" />
            <path d="M15.500 611V640M19 643.500H48M41.500 624V630M34.500 656V649.500H38M41.500 649V656M46.500 649V656" />
        </g>
        <path d="M16 598L20 603L24 598M20 603V608M51.500 634L60 643M60 634L51.500 643" fill="none" stroke="#d5d8da" />

        {/* compass */}
        <circle cx="1209.500" cy="193.500" r="35.500" fill="none" stroke="#43494f" strokeWidth="9" />
        <path d="M1192.500 176.500H1226.500V210.500H1192.500Z" fill="#b3b9bb" stroke="#c6cacc" />
        <path d="M1199 183H1220V204H1199Z" fill="#a5abad" />
        <g fontFamily="'Liberation Sans', sans-serif" fontWeight="bold" textAnchor="middle" fill="#bfc3c5">
            <g fontSize="14">
                <text x="1209.500" y="161">N</text>
                <text x="1209.500" y="236">S</text>
                <text x="1172" y="198.500">W</text>
                <text x="1247.500" y="198.500">E</text>
            </g>
            <text x="1209.500" y="196.500" fontSize="8.500" fill="#4d5356" textLength="15" lengthAdjust="spacingAndGlyphs">TOP</text>
        </g>
        <rect x="1194" y="253" width="31" height="10" rx="2.500" fill="#8f949d" />
        <text x="1197" y="260" fill="#5d636b" fontSize="7.500" fontFamily="'Liberation Sans', sans-serif">WCS</text>
        <path d="M1217 256.500h5" stroke="#b9bdc3" />

        {/* child window buttons */}
        <g fill="none" stroke="#eee" strokeWidth="1.5">
            <path d="M1224 134H1231" strokeWidth="2" />
            <path d="M1238 132.500H1242V136H1238ZM1239.500 132V130H1244V134.500H1242" strokeWidth="1.2" />
            <path d="M1251.500 130L1256.500 136M1256.500 130L1251.500 136" />
        </g>
    </svg>
);

const NavTools = () => (
    <svg width="21" height="140" viewBox="0 0 21 140" fill="none" stroke="#474d53">
        <circle cx="17" cy="3.500" r="1.500" />
        <path d="M4 14Q4 12 6 12H18V25L16 27H6L4 25Z" /><circle cx="11" cy="19.500" r="5.500" /><circle cx="11" cy="19.500" r="3" />
        <path d="M5 54L3 48L5 47L7 50V43H9V48V41H11V48V42H13V48L14 44H16V51L13 55H7Z" />
        <path d="M2 61L13 72M2 72L13 61" /><circle cx="14" cy="69" r="3.500" /><path d="M16 72L19 75" />
        <ellipse cx="11" cy="92" rx="7.500" ry="3" /><ellipse cx="11" cy="92" rx="3" ry="7" />
        <path d="M3 113h4v3H3zM9 113h4v3H9zM15 113h4v3h-4zM3 119H14V128H3ZM7 121v5l4-2.500z" />
        <path d="M10 33h2M10 79h2M10 105h2" stroke="#272c31" /><path d="M15 137h4v-2" />
    </svg>
);

/* ---------- bottom bars ---------- */

const toggles = [
    ['M3 3h1M6 3h1M9 3h1M3 6h1M6 6h1M9 6h1M3 9h1M6 9h1M9 9h1', false],
    ['M1 1H11V11H1ZM1 4H11M1 7.500H11M4 1V11M7.500 1V11', true],
    ['M2 1V10H11M2 7H5V10', true],
    ['M10 3A4 4 0 1 0 10 8M6 6L11 2M6 6H11', false],
    ['M2 2H11V11H2ZM1 1H4V4H1Z', true],
    ['M4 2H11V8H4ZM2 4V11H8M1 9H4V12H1Z', false],
    ['M10 2L2 10H11', true],
    ['M2 1V11H11M3 10L9 4M8 2L11 5', false],
    ['M1 6H7M4 3V9M7 8H12', true],
    ['M1 1H11V11H1ZM3 3h1M6 3h1M9 3h1M3 6h1M6 6h1M9 6h1M3 9h1M6 9h1M9 9h1', true],
    ['M3 2H9V10H3ZM5 5H8', false],
];

const toggleFills = { 4: '#fafafa', 5: '#fafafa', 9: '#cfe9fb' };

const Status = () => (
    <StatusBar>
        <Coordinates>30.0773, 19.9923, 0.0000</Coordinates>
        {toggles.map(([d, on], i) => (
            <StatusToggle key={i} $on={on}>
                <svg width="12" height="12" viewBox="0 0 12 12">
                    <path d={d} fill={toggleFills[i] || 'none'} stroke={i === 9 ? '#2b82bd' : '#34383c'} strokeWidth=".9" />
                    {(i === 4 || i === 5) && <path d={i === 4 ? 'M1 1H3V3H1Z' : 'M1 9H3V11H1Z'} fill="#e0714a" />}
                    {i === 7 && <circle cx="9.500" cy="3.500" r="1.500" fill="#f0a12c" />}
                </svg>
            </StatusToggle>
        ))}
        <StatusRight>
            <StatusToggle $width={35}>MODEL</StatusToggle>
            <StatusToggle $width={14}><Glyph w={11} h={11}><path d="M1 1H10V9H1ZM3 3L7 8" fill="#eee" /></Glyph></StatusToggle>
            <StatusToggle $width={15}><Glyph w={12} h={11}><path d="M1 1H11V7H1ZM6 1V7M0 9H12" fill="#eee" stroke="#333" /></Glyph></StatusToggle>
            <StatusGap />
            <StatusToggle $width={36}><Glyph w={11} h={11}><path d="M5.500 1L9 10L5.500 7L2 10Z" fill="#eee" /></Glyph>1:1&nbsp;<Arrow size={5} /></StatusToggle>
            <StatusToggle $width={14}><Glyph w={12} h={11}><path d="M5.500 1L9 10L5.500 7L2 10Z" fill="#eee" /><circle cx="9" cy="6" r="2" fill="#f3b33b" stroke="none" /></Glyph></StatusToggle>
            <StatusToggle $width={13}><Glyph w={12} h={11}><path d="M4 1L8 10L4 7L1 10ZM8 2L11 9" fill="#ccc" stroke="#888" /></Glyph></StatusToggle>
            <StatusGap />
            <StatusToggle $width={14}><Glyph w={12} h={12}><circle cx="6" cy="6" r="4.500" fill="#eee" stroke="#444" strokeDasharray="2 1" strokeWidth="2" /><circle cx="6" cy="6" r="2" stroke="#444" /></Glyph></StatusToggle>
            <StatusToggle $width={14}><Glyph w={12} h={12}><path d="M1 6H7V11H1ZM6 6V3A2 2 0 0 1 10 3V5" fill="#ddd" stroke="#444" /></Glyph></StatusToggle>
            <StatusToggle $width={15}><Glyph w={12} h={12}><circle cx="6" cy="6" r="4.500" fill="#e8732a" stroke="#b5531a" /></Glyph></StatusToggle>
            <StatusToggle $width={19}><Glyph w={12} h={12}><path d="M4 8A3.500 3.500 0 1 1 8 8V11H4Z" fill="#fff3b0" stroke="#777" /></Glyph></StatusToggle>
            <StatusToggle $width={10}><Arrow size={4} /></StatusToggle>
            <StatusToggle $width={16}><Glyph w={11} h={11}><path d="M1 1H10V10H1Z" fill="#f5f5f5" /><path d="M1 2H10" stroke="#333" strokeWidth="2" /></Glyph></StatusToggle>
        </StatusRight>
    </StatusBar>
);

const Sheets = () => (
    <LayoutStrip>
        {['M3 2V9M9 2L5 5.500L9 9Z', 'M8 2L4 5.500L8 9Z', 'M4 2L8 5.500L4 9Z', 'M9 2V9M3 2L7 5.500L3 9Z'].map((d) => (
            <StepButton key={d}><svg width="12" height="11"><path d={d} fill="#555" stroke="#555" strokeWidth=".6" /></svg></StepButton>
        ))}
        <SheetTabs width="148" height="14">
            <path d="M0 0H45L40 13H6Z" fill="#1f272f" />
            <path d="M45 0L40 12.500H82L90 0M82 12.500H127L135 0" fill="none" stroke="#333" />
            <text x="10" y="10" fill="#fff" fontWeight="bold" textLength="26" lengthAdjust="spacingAndGlyphs">Model</text>
            <text x="49" y="10" fill="#222" textLength="31" lengthAdjust="spacingAndGlyphs">Layout1</text>
            <text x="94" y="10" fill="#222" textLength="32" lengthAdjust="spacingAndGlyphs">Layout2</text>
        </SheetTabs>
        <HScroll>
            <HBlock $width={4} />
            <svg width="5" height="7"><path d="M4 1L1.500 3.500L4 6" fill="none" stroke="#333" strokeWidth="1.3" /></svg>
            <HBlock $width={14} />
        </HScroll>
        <RecorderOverlay>
            <svg width="53" height="17">
                <path d="M8 4h4v11H8zM15 4h4v11h-4z" fill="#878787" />
                <path d="M32 4H47V14H32Z" fill="none" stroke="#8a8a8a" />
                <path d="M34 14Q36 6 40 7L46 14Z" fill="#aaa" />
                <path d="M40 7L47 13M44 12h3v-3" stroke="#333" fill="none" />
            </svg>
        </RecorderOverlay>
    </LayoutStrip>
);

const TaskIcon = ({ children }) => <svg width="22" height="22" viewBox="0 0 22 22">{children}</svg>;

const SnagLogo = ({ fill }) => (
    <TaskIcon>
        <rect x="1" y="1" width="20" height="20" rx="1.5" fill={fill} />
        <path d="M16 5H9Q6 5 6 8T9 11H13Q16 11 16 14T13 17H6" fill="none" stroke="#fff" strokeWidth="3.2" />
    </TaskIcon>
);

const AcadMark = ({ size }) => (
    <svg width={size} height={size} viewBox="0 0 20 20">
        <path d="M9 1H12L20 18L15 17L11 10L5 16L1 18Z" fill="#c8281c" />
        <path d="M9 1H12L11 10L1 18Z" fill="#8c130d" />
        <path d="M5 16L11 12L15 17L11 14Z" fill="#e8644d" />
    </svg>
);

const TaskbarContent = () => (
    <Taskbar>
        <StartButton>
            <svg width="15" height="15" viewBox="0 0 15 15"><path d="M0 2L6.500 1V7H0ZM7.500 1L15 0V7H7.500ZM0 8H6.500V14L0 13ZM7.500 8H15V15L7.500 14Z" fill="#f4f4f4" /></svg>
        </StartButton>
        <SearchBox>
            <svg width="14" height="15" viewBox="0 0 14 15" fill="none" stroke="#222" strokeWidth="1.3"><circle cx="8.500" cy="5.500" r="4.500" /><path d="M5.500 9L0.500 14" /></svg>
            Type here to search
        </SearchBox>
        <TaskItem>
            <TaskIcon><path d="M5 8H14V14H5ZM4.500 6V4M14.500 6V4M5 4.500H14M4.500 16V18M14.500 16V18M5 17.500H14M17.500 4V18M16.500 9H18.500" fill="none" stroke="#eee" /></TaskIcon>
        </TaskItem>
        <TaskItem>
            <TaskIcon>
                <circle cx="11" cy="11" r="10" fill="#1b82d2" />
                <path d="M1.500 9A10 10 0 0 1 21 10Q21 15 15 14Q12 13 14 11Q13 6 8 6Q4 6 1.500 9Z" fill="#45cf9b" />
                <path d="M8 10Q6 16 12 19Q16 20 19 17A10 10 0 0 1 11 21Q3 19 3 12Q4 9 8 10Z" fill="#134f96" />
                <path d="M13 14Q10 13 12 10.500Q15 12 21 11Q20 15 16 15Z" fill="#1b1b1b" />
            </TaskIcon>
        </TaskItem>
        <TaskItem>
            <TaskIcon><path d="M1 8L11 2L21 8V20H1Z" fill="#1262b5" /><path d="M2 8H20V13L11 17L2 13Z" fill="#f5f5f5" /><path d="M1 8L11 14L21 8V20H1Z" fill="#2e9fe8" /><path d="M3 8H19L11 13Z" fill="#fff" /></TaskIcon>
        </TaskItem>
        <TaskItem>
            <TaskIcon><path d="M6 7V2H16V7" fill="none" stroke="#f2f2f2" strokeWidth="1.5" /><path d="M1 6H21V20H1Z" fill="#f5f5f5" /><path d="M7 9h3.500v3.500H7z" fill="#e84e2c" /><path d="M11.500 9H15v3.500h-3.500z" fill="#7fba00" /><path d="M7 13.500h3.500V17H7z" fill="#20a4e8" /><path d="M11.500 13.500H15V17h-3.500z" fill="#f7b500" /></TaskIcon>
        </TaskItem>
        <TaskItem $open>
            <TaskIcon><path d="M2 2H9L11 4H20V19H2Z" fill="#e2a631" /><path d="M2 7H20V19H2Z" fill="#f9d66c" /><path d="M5 19V13H17V19H14V16H8V19Z" fill="#3892cf" /></TaskIcon>
        </TaskItem>
        <TaskItem>
            <TaskIcon><path d="M2 2H20V20H2Z" fill="#fbc70c" /><path d="M20 12V20H11V12Z" fill="#37342c" /><path d="M11 12H20L11 20Z" fill="#e0a800" /></TaskIcon>
        </TaskItem>
        <TaskItem><SnagLogo fill="#3f8bc9" /></TaskItem>
        <TaskItem $open>
            <TaskIcon>
                <circle cx="10" cy="10" r="9" fill="#2c9fdb" /><path d="M4 10L16 5L14 15L10 12.500Z" fill="#fff" />
                <rect x="9" y="12" width="13" height="9" rx="4" fill="#e2372f" />
                <text x="10.500" y="19.500" fontSize="7.500" fill="#fff" fontFamily="'Liberation Sans', sans-serif">.95</text>
            </TaskIcon>
        </TaskItem>
        <TaskItem $open $active>
            <TaskIcon>
                <rect x="1" y="1" width="20" height="20" fill="#dc4747" /><path d="M1 21V9L21 21Z" fill="#f3b1ac" />
                <path d="M10 4H12L18 17L12 13L5 16Z" fill="#68100d" />
            </TaskIcon>
        </TaskItem>
        <TaskItem $open>
            <TaskIcon>
                <path d="M4 1Q10 -1 16 1Q20 4 19 11Q18 16 10 16L6 20V15Q0 12 1 7Z" fill="#7d5bd6" stroke="#eee" strokeWidth="1.5" />
                <path d="M6 5Q5 11 12 14L14 12L11 10L10 11Q8 9 8 8L9 7L8 4Z" fill="#fff" />
                <circle cx="15" cy="15" r="6.500" fill="#e2302c" /><text x="12.500" y="18.500" fontSize="9.500" fill="#fff" fontFamily="'Liberation Sans', sans-serif">1</text>
            </TaskIcon>
        </TaskItem>
        <TaskItem $open>
            <TaskIcon>
                <path d="M1 1H16L21 6V21H1Z" fill="#642369" />
                <text x="5" y="13.500" fontSize="13" fontWeight="bold" fill="#fff" fontFamily="'Liberation Sans', sans-serif">G</text>
                <text x="6" y="19" fontSize="5" fontWeight="bold" fill="#fff" fontFamily="'Liberation Sans', sans-serif">PDF</text>
            </TaskIcon>
        </TaskItem>
        <TaskItem $open><SnagLogo fill="#e94f3d" /></TaskItem>
        <TaskItem $open>
            <TaskIcon>
                <path d="M4 1H19V21H4Z" fill="#57646e" /><path d="M5 2H18V6H5Z" fill="#56cbea" />
                <path d="M5.500 8h3v3h-3zM10 8h3v3h-3zM14.500 8h3v3h-3zM5.500 12h3v3h-3zM10 12h3v3h-3zM5.500 16h3v3h-3zM10 16h3v3h-3z" fill="#ccd2d7" /><path d="M14.500 12h3v7h-3z" fill="#1b4c8d" />
            </TaskIcon>
        </TaskItem>
        <Tray>
            <TrayItem $width={20}><svg width="12" height="8"><path d="M1 7L6 2L11 7" fill="none" stroke="#eee" strokeWidth="1.2" /></svg></TrayItem>
            <TrayItem $width={20}><svg width="10" height="14"><path d="M2 0h6v9H2z" fill="#eee" /><path d="M1.500 7V10.500H8.500V7M5 10V13M3 13h4" fill="none" stroke="#eee" /></svg></TrayItem>
            <TrayItem $width={22}><svg width="14" height="9"><path d="M.5 1H11.500V8H.5ZM12 3.500h1.500v2H12" fill="none" stroke="#eee" /><path d="M2 2.500h5v4H2z" fill="#eee" /></svg></TrayItem>
            <TrayItem $width={19}><svg width="13" height="13" fill="none" stroke="#ddd"><path d="M1.500 12A10 10 0 0 1 12 2M4.500 12A7 7 0 0 1 12 5M7.500 12A4 4 0 0 1 12 8" /><circle cx="11" cy="11" r="1" fill="#ddd" /></svg></TrayItem>
            <TrayItem $width={21}><svg width="16" height="13" fill="none" stroke="#eee"><path d="M1 5H3L6 2V11L3 8H1ZM8 5Q9 6.500 8 8M10 3Q12.500 6.500 10 10M12.500 1Q16 6.500 12.500 12" /></svg></TrayItem>
            <TrayItem $width={27}>ENG</TrayItem>
            <Clock>8:00 PM<br />1/21/2021</Clock>
            <TrayItem $width={36}><svg width="15" height="14"><path d="M1 1H14V11H9L7 13L6 11H1Z" fill="#eee" /><path d="M3 4H12M3 6.500H12M3 9H7" stroke="#333" /><circle cx="11" cy="10" r="3" fill="#eee" stroke="#333" /><path d="M9 12L13 8" stroke="#333" /></svg></TrayItem>
            <DesktopEdge />
        </Tray>
    </Taskbar>
);

const App = () => (
    <Window>
        <GlobalStyle />
        <TitleBar>
            <TitleText><span>Autodesk AutoCAD 2014</span><span>Drawing1.dwg</span></TitleText>
            <WindowButtons>
                <svg width="8" height="9"><path d="M0 4.500H8" stroke="#999" /></svg>
                <svg width="9" height="9" fill="none" stroke="#777"><path d="M.5 2.500H6.500V8.500H.5ZM2.500 2V.5H8.500V6.500H7" /></svg>
                <svg width="9" height="9"><path d="M.5 .5L8.500 8.500M8.500 .5L.5 8.500" stroke="#777" /></svg>
            </WindowButtons>
        </TitleBar>
        <TabBar>
            {tabs.map(([name, width, active]) => (
                <Tab key={name} $width={width} $active={active}>{name}</Tab>
            ))}
            <TabToggle>
                <svg width="12" height="8"><rect x=".5" y=".5" width="11" height="6.5" rx="2" fill="#ececec" stroke="#444" /><path d="M4 5L6 2.500L8 5Z" fill="#222" /></svg>
                <Arrow size={4} />
            </TabToggle>
        </TabBar>
        <AppButton><AcadMark size={17} /><Arrow size={4} color="#222" /></AppButton>
        <RibbonContent />
        <RibbonEdge />
        <Workspace>
            <Canvas>
                <Drawing />
                <DynamicInput $x={268} $y={142} $width={39}><Selected>2.4027</Selected></DynamicInput>
                <DynamicInput $x={1020} $y={50} $width={20} $locked>0°</DynamicInput>
                <NavBar><NavTools /></NavBar>
                <CommandHistory>Specify first point:</CommandHistory>
                <CommandLine>
                    <CommandGrip>
                        <svg width="45" height="21">
                            <path d="M4.500 3V18M7.500 3V18" stroke="#b8b8b8" strokeDasharray="1 1" />
                            <path d="M13 8L19 14M19 8L13 14" stroke="#fff" strokeWidth="1.7" />
                            <path d="M34 9L40 15" stroke="#eee" strokeWidth="2.5" /><path d="M33 5A3 3 0 1 1 29 9L32 10L34 8Z" fill="#eee" />
                        </svg>
                    </CommandGrip>
                    <svg width="26" height="18">
                        <path d="M5 14L16 4" stroke="#666" /><path d="M4 13h2v2H4zM15 3h2v2h-2z" fill="#444" /><path d="M19 7H24L21.500 10Z" fill="#999" />
                    </svg>
                    <CommandText>
                        <CommandName>LINE</CommandName>
                        <span>Specify next point or [<CommandOption>Undo</CommandOption>]:  &lt;Ortho on&gt;</span>
                    </CommandText>
                    <ComboEnd><svg width="6" height="4"><path d="M0 4L3 0L6 4Z" fill="#222" /></svg></ComboEnd>
                </CommandLine>
            </Canvas>
            <ScrollBar>
                <svg width="8" height="5"><path d="M1 4.500L4 1.500L7 4.500" fill="none" stroke="#444" strokeWidth="1.4" /></svg>
                <ScrollThumb />
                <svg width="8" height="5"><path d="M1 .5L4 3.500L7 .5" fill="none" stroke="#444" strokeWidth="1.4" /></svg>
            </ScrollBar>
        </Workspace>
        <Sheets />
        <Status />
        <TaskbarContent />
    </Window>
);

export default App;
